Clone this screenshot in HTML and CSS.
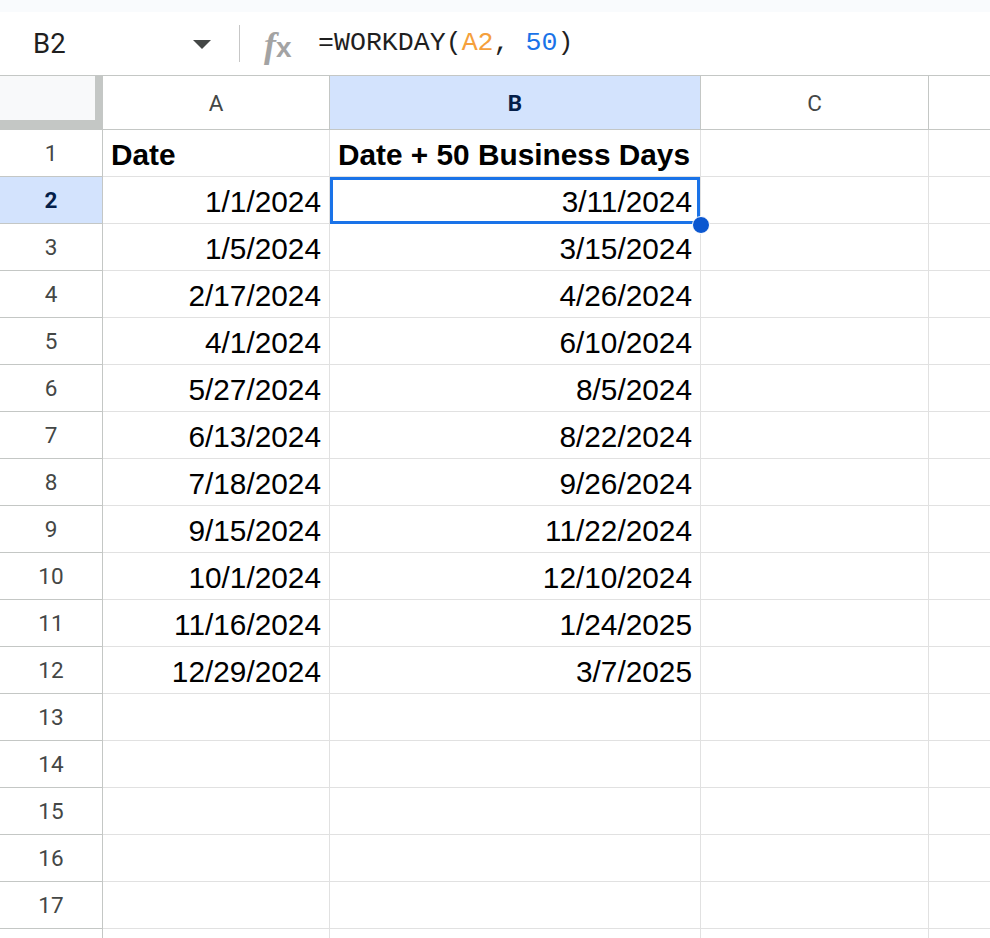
FILE: index.html
```html
<!DOCTYPE html>
<html>
<head>
<meta charset="utf-8">
<link rel="stylesheet" href="styles.css">
</head>
<body>
<div class="topband"></div>
<div class="fbar">
  <div class="namebox">B2</div>
  <div class="caret"></div>
  <div class="sep"></div>
  <div class="fx"><span class="fx-f">f</span><span class="fx-x">x</span></div>
  <div class="formula">=WORKDAY(<span class="ref">A2</span>, <span class="num">50</span>)</div>
</div>
<div class="grid">
  <div class="corner"></div>
  <div class="colhdr">A</div>
  <div class="colhdr sel">B</div>
  <div class="colhdr">C</div>
  <div class="colhdr last"></div>

  <div class="rowhdr">1</div><div class="cell bold">Date</div><div class="cell bold">Date + 50 Business Days</div><div class="cell"></div><div class="cell last"></div>
  <div class="rowhdr sel">2</div><div class="cell num">1/1/2024</div><div class="cell num">3/11/2024</div><div class="cell"></div><div class="cell last"></div>
  <div class="rowhdr">3</div><div class="cell num">1/5/2024</div><div class="cell num">3/15/2024</div><div class="cell"></div><div class="cell last"></div>
  <div class="rowhdr">4</div><div class="cell num">2/17/2024</div><div class="cell num">4/26/2024</div><div class="cell"></div><div class="cell last"></div>
  <div class="rowhdr">5</div><div class="cell num">4/1/2024</div><div class="cell num">6/10/2024</div><div class="cell"></div><div class="cell last"></div>
  <div class="rowhdr">6</div><div class="cell num">5/27/2024</div><div class="cell num">8/5/2024</div><div class="cell"></div><div class="cell last"></div>
  <div class="rowhdr">7</div><div class="cell num">6/13/2024</div><div class="cell num">8/22/2024</div><div class="cell"></div><div class="cell last"></div>
  <div class="rowhdr">8</div><div class="cell num">7/18/2024</div><div class="cell num">9/26/2024</div><div class="cell"></div><div class="cell last"></div>
  <div class="rowhdr">9</div><div class="cell num">9/15/2024</div><div class="cell num">11/22/2024</div><div class="cell"></div><div class="cell last"></div>
  <div class="rowhdr">10</div><div class="cell num">10/1/2024</div><div class="cell num">12/10/2024</div><div class="cell"></div><div class="cell last"></div>
  <div class="rowhdr">11</div><div class="cell num">11/16/2024</div><div class="cell num">1/24/2025</div><div class="cell"></div><div class="cell last"></div>
  <div class="rowhdr">12</div><div class="cell num">12/29/2024</div><div class="cell num">3/7/2025</div><div class="cell"></div><div class="cell last"></div>
  <div class="rowhdr">13</div><div class="cell"></div><div class="cell"></div><div class="cell"></div><div class="cell last"></div>
  <div class="rowhdr">14</div><div class="cell"></div><div class="cell"></div><div class="cell"></div><div class="cell last"></div>
  <div class="rowhdr">15</div><div class="cell"></div><div class="cell"></div><div class="cell"></div><div class="cell last"></div>
  <div class="rowhdr">16</div><div class="cell"></div><div class="cell"></div><div class="cell"></div><div class="cell last"></div>
  <div class="rowhdr">17</div><div class="cell"></div><div class="cell"></div><div class="cell"></div><div class="cell last"></div>
  <div class="rowhdr"></div><div class="cell"></div><div class="cell"></div><div class="cell"></div><div class="cell last"></div>

  <div class="selection"></div>
  <div class="handle"></div>
</div>
</body>
</html>
```
FILE: styles.css
```css
* { box-sizing: border-box; }
html, body {
  margin: 0;
  padding: 0;
  width: 990px;
  height: 938px;
  overflow: hidden;
  background: #ffffff;
  font-family: "Liberation Sans", Arial, sans-serif;
}
.topband {
  height: 12px;
  background: #f9fbfd;
}
.fbar {
  height: 64px;
  display: flex;
  align-items: center;
  border-bottom: 1px solid #c4c7c5;
  background: #ffffff;
  padding-left: 33px;
}
.namebox {
  width: 160px;
  font-family: Roboto, "Liberation Sans", sans-serif;
  font-size: 27.5px;
  color: #1f1f1f;
  line-height: 1;
}
.caret {
  width: 0;
  height: 0;
  border-left: 9px solid transparent;
  border-right: 9px solid transparent;
  border-top: 9px solid #444746;
  margin-top: 2px;
}
.sep {
  width: 1px;
  height: 37px;
  background: #c7c7c7;
  margin-left: 28px;
}
.fx {
  margin-left: 24px;
  width: 36px;
  display: flex;
  align-items: baseline;
  color: #a3a3a3;
  line-height: 1;
  margin-top: 2px;
}
.fx-f {
  font-family: "Liberation Serif", serif;
  font-style: italic;
  font-weight: bold;
  font-size: 36px;
}
.fx-x {
  font-family: "Liberation Sans", sans-serif;
  font-weight: bold;
  font-size: 28px;
  margin-left: 0;
}
.formula {
  margin-left: 18px;
  font-family: "Liberation Mono", "DejaVu Sans Mono", monospace;
  font-size: 26.6px;
  color: #1f1f1f;
  white-space: pre;
  line-height: 1;
}
.formula .ref { color: #f5a03c; }
.formula .num { color: #1a73e8; }

.grid {
  position: relative;
  display: grid;
  grid-template-columns: 103px 227px 371px 228px 1fr;
  grid-template-rows: 54px repeat(18, 47px);
}
.corner {
  background: #f8f9fa;
  border-right: 8px solid #c4c7c5;
  border-bottom: 10px solid #c4c7c5;
}
.colhdr {
  display: flex;
  align-items: center;
  justify-content: center;
  border-right: 1px solid #c4c7c5;
  border-bottom: 1px solid #c4c7c5;
  font-family: Roboto, "Liberation Sans", sans-serif;
  font-size: 22.5px;
  color: #444746;
  background: #ffffff;
}
.colhdr.sel {
  background: #d3e3fd;
  color: #041e49;
  font-weight: bold;
}
.colhdr.last { border-right: none; }
.rowhdr {
  display: flex;
  align-items: center;
  justify-content: center;
  border-right: 1px solid #c4c7c5;
  border-bottom: 1px solid #c4c7c5;
  font-family: Roboto, "Liberation Sans", sans-serif;
  font-size: 22.5px;
  color: #444746;
  background: #ffffff;
}
.rowhdr.sel {
  background: #d3e3fd;
  color: #041e49;
  font-weight: bold;
}
.cell {
  display: flex;
  align-items: flex-end;
  padding: 0 8px 4px 8px;
  border-right: 1px solid #e1e1e1;
  border-bottom: 1px solid #e1e1e1;
  font-size: 29.8px;
  color: #000000;
  white-space: nowrap;
  overflow: visible;
}
.cell.last { border-right: none; }
.cell.bold { font-weight: bold; }
.cell.num { justify-content: flex-end; }

.selection {
  position: absolute;
  left: 330px;
  top: 101px;
  width: 370px;
  height: 47px;
  border: 3px solid #1a73e8;
  pointer-events: none;
}
.handle {
  position: absolute;
  left: 692px;
  top: 140px;
  width: 18px;
  height: 18px;
  border-radius: 50%;
  background: #0b57d0;
  border: 1px solid #ffffff;
}
```
